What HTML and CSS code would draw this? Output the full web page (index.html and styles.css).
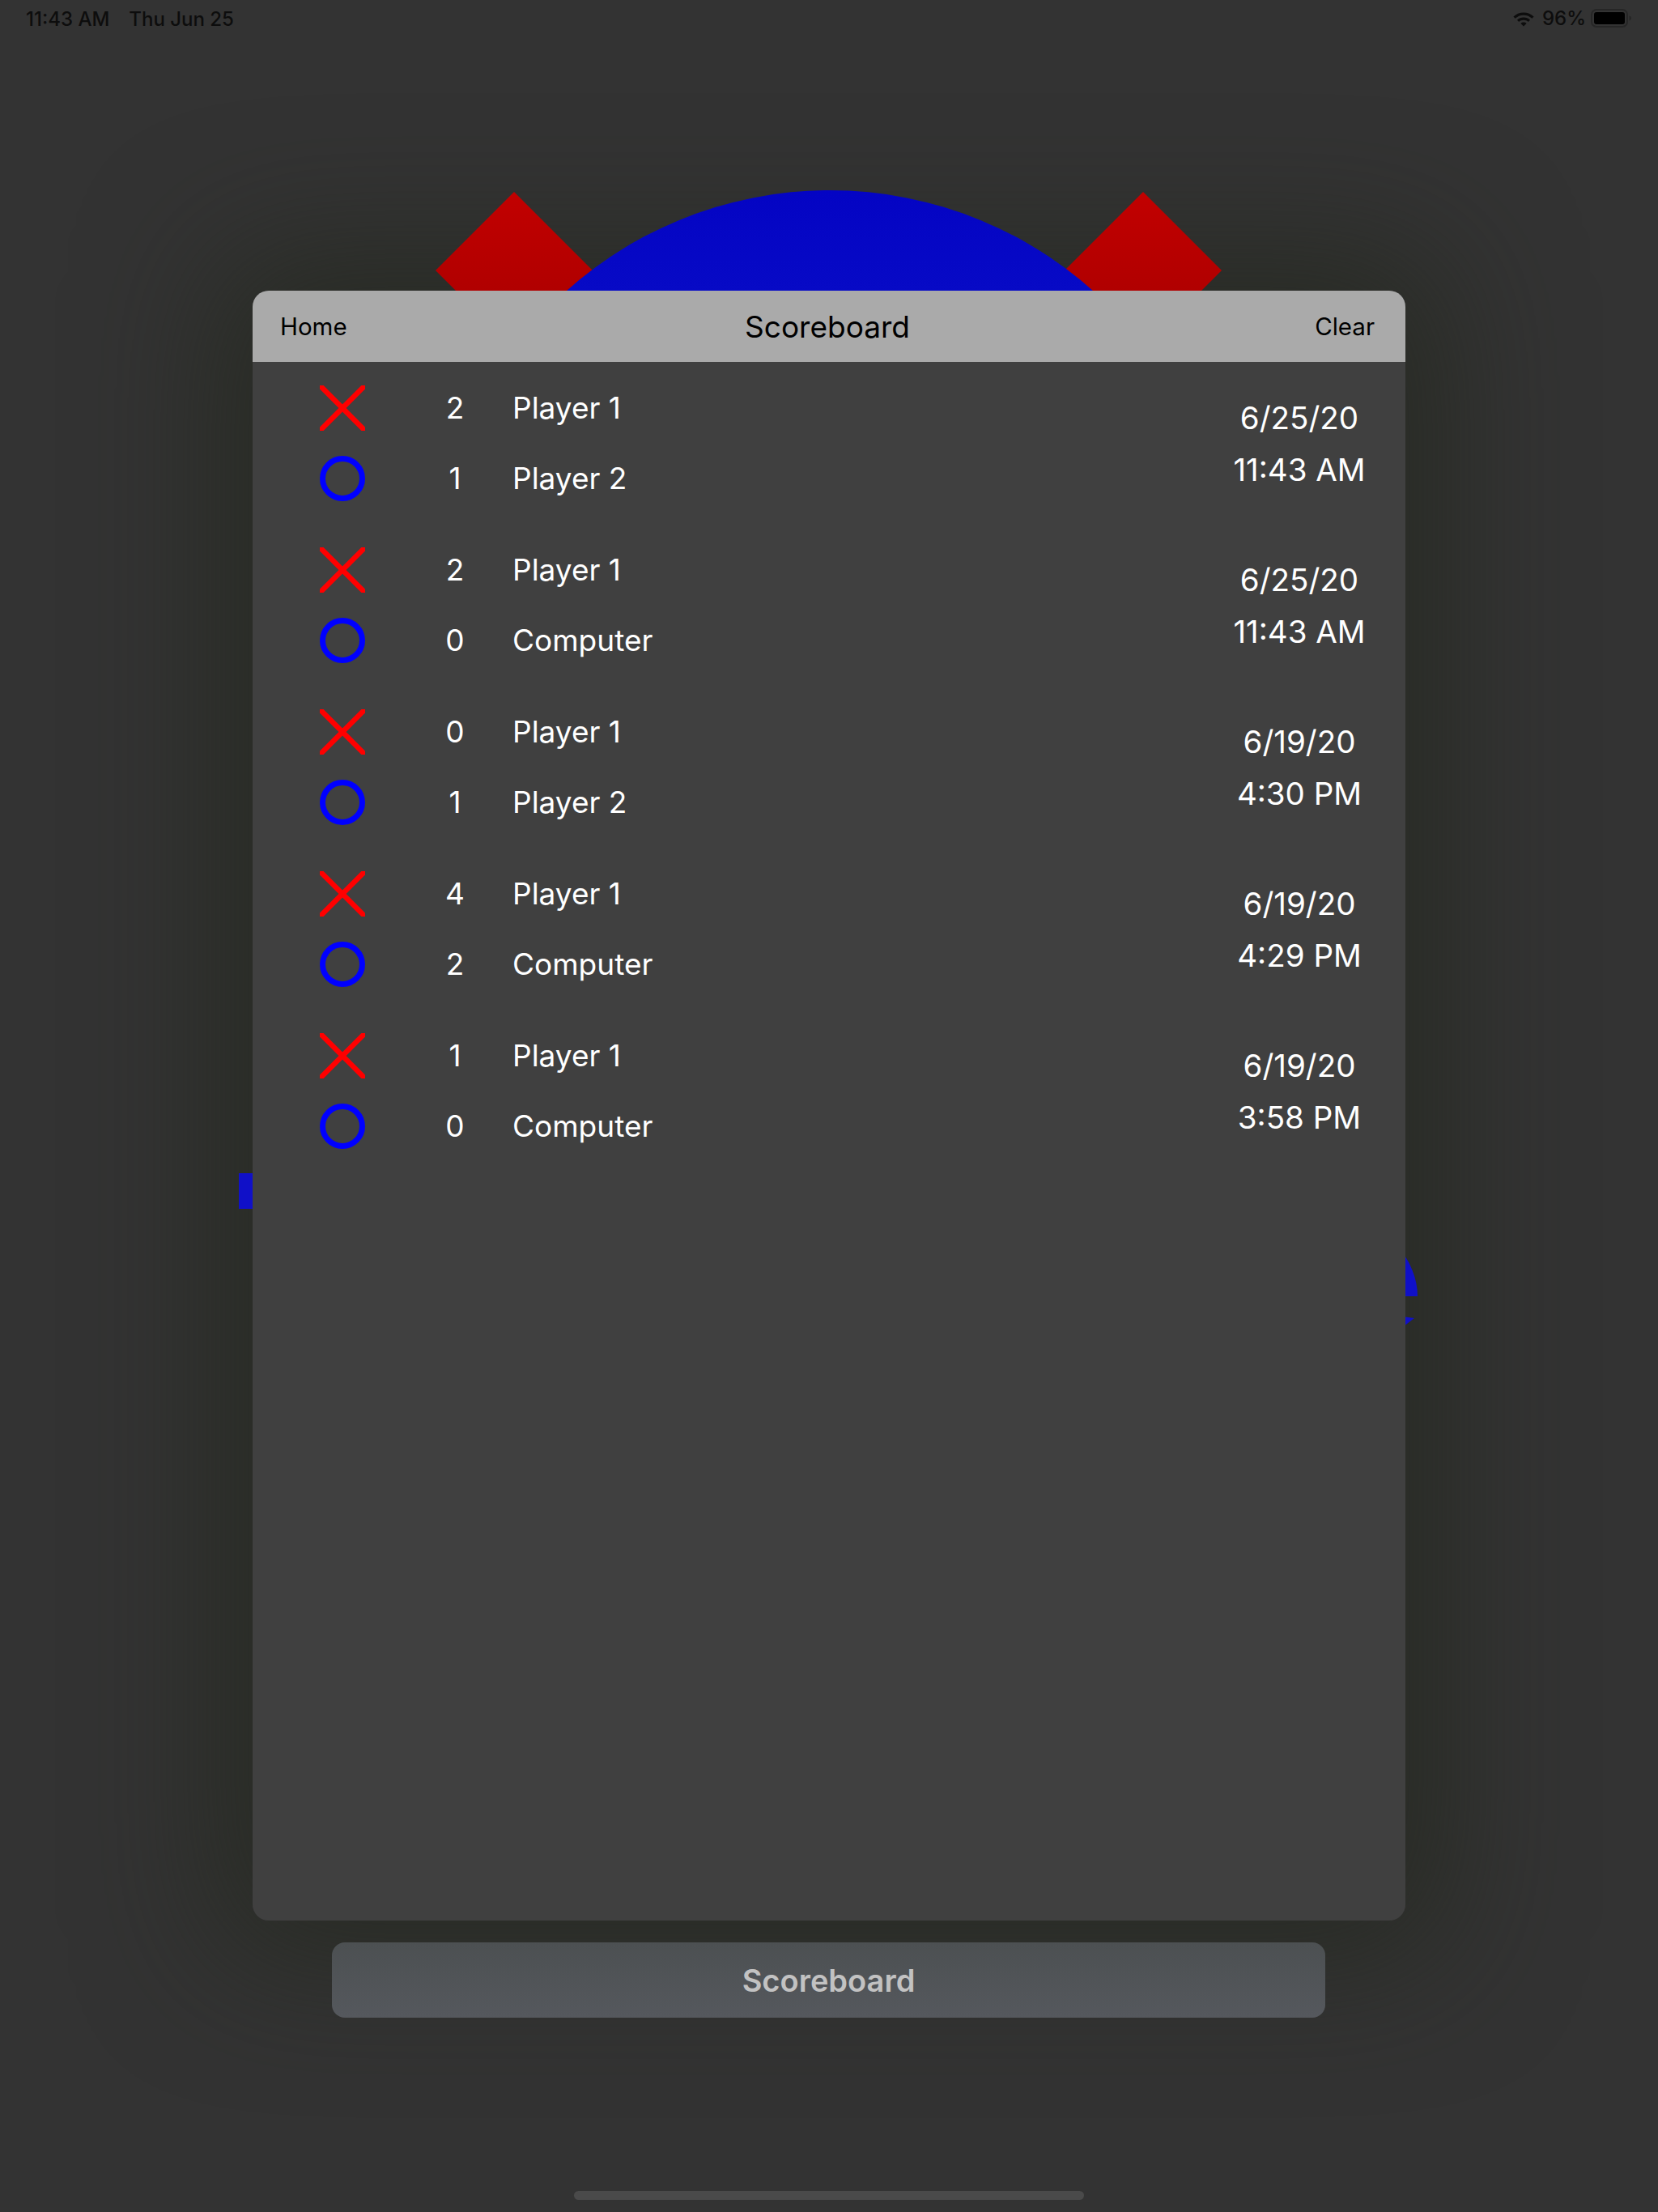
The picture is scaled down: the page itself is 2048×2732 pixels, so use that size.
FILE: index.html
```html
<!DOCTYPE html>
<html lang="en">
<head>
<meta charset="utf-8">
<title>Scoreboard</title>
<link rel="stylesheet" href="styles.css">
</head>
<body>
<div class="dim"></div>
<div class="page">
  <div class="status">
    <div class="status-left"><span>11:43 AM</span><span>Thu Jun 25</span></div>
    <div class="status-right">
      <svg class="wifi" width="28" height="20" viewBox="0 0 28 20">
        <path d="M14 2.5c4.9 0 9.3 1.9 12.6 5l-2.2 2.3C21.7 7.3 18 5.7 14 5.7S6.3 7.3 3.6 9.8L1.4 7.5C4.7 4.4 9.1 2.5 14 2.5z" fill="#0d0d0d"/>
        <path d="M14 8.6c3.1 0 5.9 1.2 8 3.1l-2.2 2.3c-1.5-1.4-3.5-2.2-5.8-2.2s-4.3.8-5.8 2.2L6 11.7c2.1-1.9 4.9-3.1 8-3.1z" fill="#0d0d0d"/>
        <path d="M14 14.6c1.4 0 2.6.5 3.5 1.4L14 19.6 10.5 16c.9-.9 2.1-1.4 3.5-1.4z" fill="#0d0d0d"/>
      </svg>
      <span class="pct">96%</span>
      <svg class="battery" width="52" height="24" viewBox="0 0 52 24">
        <rect x="1" y="1" width="44" height="21" rx="6" fill="none" stroke="#262626" stroke-width="2"/>
        <rect x="4" y="4" width="38" height="15" rx="3" fill="#000"/>
        <path d="M47.5 8.5c1.6.4 2.5 1.6 2.5 3s-.9 2.6-2.5 3z" fill="#262626"/>
      </svg>
    </div>
  </div>
  <div class="art">
    <svg width="2048" height="2349" viewBox="0 50 2048 2349">
      <defs>
        <linearGradient id="red" x1="0" y1="0" x2="0" y2="1">
          <stop offset="0" stop-color="#c20000"/>
          <stop offset="1" stop-color="#a60000"/>
        </linearGradient>
        <linearGradient id="blue" x1="0" y1="0" x2="0" y2="1">
          <stop offset="0" stop-color="#0404c4"/>
          <stop offset="0.3" stop-color="#0b12c8"/>
          <stop offset="1" stop-color="#1010c8"/>
        </linearGradient>
      </defs>
      <polygon points="635,237 732,334 635,431 538,334" fill="url(#red)"/>
      <polygon points="1412,237 1509,334 1412,431 1315,334" fill="url(#red)"/>
      <circle cx="1025" cy="723" r="488" fill="url(#blue)"/>
      <rect x="295" y="1449" width="40" height="44" fill="#1010c8"/>
      <path d="M1725 1538 C1742 1556 1751 1580 1751 1601 L1725 1601 Z" fill="#1010c8"/>
      <polygon points="1725,1625 1747,1628 1725,1645" fill="#1010c8"/>
    </svg>
  </div>
  <button class="board-btn">Scoreboard</button>
  <div class="home-bar"></div>
</div>

<div class="modal">
  <div class="modal-head">
    <span class="head-left">Home</span>
    <span class="head-title">Scoreboard</span>
    <span class="head-right">Clear</span>
  </div>
  <div class="games">
    <div class="game">
      <svg class="icon mark-x" viewBox="0 0 56 56"><line x1="-3" y1="-3" x2="59" y2="59"/><line x1="59" y1="-3" x2="-3" y2="59"/></svg>
      <span class="score s1">2</span><span class="name n1">Player 1</span>
      <svg class="icon mark-o" viewBox="0 0 56 56"><circle cx="28" cy="28" r="24.5"/></svg>
      <span class="score s2">1</span><span class="name n2">Player 2</span>
      <div class="when"><span>6/25/20</span><span>11:43 AM</span></div>
    </div>
    <div class="game">
      <svg class="icon mark-x" viewBox="0 0 56 56"><line x1="-3" y1="-3" x2="59" y2="59"/><line x1="59" y1="-3" x2="-3" y2="59"/></svg>
      <span class="score s1">2</span><span class="name n1">Player 1</span>
      <svg class="icon mark-o" viewBox="0 0 56 56"><circle cx="28" cy="28" r="24.5"/></svg>
      <span class="score s2">0</span><span class="name n2">Computer</span>
      <div class="when"><span>6/25/20</span><span>11:43 AM</span></div>
    </div>
    <div class="game">
      <svg class="icon mark-x" viewBox="0 0 56 56"><line x1="-3" y1="-3" x2="59" y2="59"/><line x1="59" y1="-3" x2="-3" y2="59"/></svg>
      <span class="score s1">0</span><span class="name n1">Player 1</span>
      <svg class="icon mark-o" viewBox="0 0 56 56"><circle cx="28" cy="28" r="24.5"/></svg>
      <span class="score s2">1</span><span class="name n2">Player 2</span>
      <div class="when"><span>6/19/20</span><span>4:30 PM</span></div>
    </div>
    <div class="game">
      <svg class="icon mark-x" viewBox="0 0 56 56"><line x1="-3" y1="-3" x2="59" y2="59"/><line x1="59" y1="-3" x2="-3" y2="59"/></svg>
      <span class="score s1">4</span><span class="name n1">Player 1</span>
      <svg class="icon mark-o" viewBox="0 0 56 56"><circle cx="28" cy="28" r="24.5"/></svg>
      <span class="score s2">2</span><span class="name n2">Computer</span>
      <div class="when"><span>6/19/20</span><span>4:29 PM</span></div>
    </div>
    <div class="game">
      <svg class="icon mark-x" viewBox="0 0 56 56"><line x1="-3" y1="-3" x2="59" y2="59"/><line x1="59" y1="-3" x2="-3" y2="59"/></svg>
      <span class="score s1">1</span><span class="name n1">Player 1</span>
      <svg class="icon mark-o" viewBox="0 0 56 56"><circle cx="28" cy="28" r="24.5"/></svg>
      <span class="score s2">0</span><span class="name n2">Computer</span>
      <div class="when"><span>6/19/20</span><span>3:58 PM</span></div>
    </div>
  </div>
</div>
</body>
</html>
```
FILE: styles.css
```css
* { box-sizing: border-box; }

html, body {
  margin: 0;
  padding: 0;
}

body {
  width: 2048px;
  height: 2732px;
  overflow: hidden;
  position: relative;
  background: #333333;
  font-family: Inter, "Noto Sans", "Liberation Sans", sans-serif;
}

.dim {
  position: absolute;
  left: 312px;
  top: 359px;
  width: 1424px;
  height: 2013px;
  border-radius: 20px;
  box-shadow: 0 0 170px 40px rgba(36, 40, 31, 0.75);
  z-index: 0;
}

.page {
  position: relative;
  z-index: 1;
  display: flex;
  flex-direction: column;
  height: 2732px;
}

.status {
  height: 50px;
  display: flex;
  justify-content: space-between;
  align-items: flex-start;
  padding: 0 31px 0 32px;
  color: #0d0d0d;
  font-size: 24px;
  font-weight: 500;
  line-height: 1;
}

.status-left {
  display: flex;
  gap: 24px;
  padding-top: 12px;
}

.status-right {
  display: flex;
  align-items: center;
  padding-top: 11px;
}

.wifi { margin-right: 9px; margin-top: -1px; }
.pct { margin-right: 6px; }
.battery { display: block; }

.art {
  height: 2349px;
  flex: none;
}

.art svg { display: block; }

.board-btn {
  flex: none;
  margin-left: 410px;
  width: 1227px;
  height: 93px;
  border: none;
  border-radius: 16px;
  background: linear-gradient(#4c5052, #55585d);
  color: #c2c2c2;
  font-family: Inter, "Noto Sans", "Liberation Sans", sans-serif;
  font-size: 38px;
  font-weight: 600;
  padding: 0;
}

.home-bar {
  flex: none;
  margin-top: 214px;
  margin-left: 709px;
  width: 630px;
  height: 11px;
  border-radius: 6px;
  background: #4a4a4a;
}

.modal {
  position: absolute;
  left: 312px;
  top: 359px;
  width: 1424px;
  height: 2013px;
  border-radius: 20px;
  overflow: hidden;
  background: #404040;
  z-index: 2;
}

.modal-head {
  height: 88px;
  background: #aaaaaa;
  display: grid;
  grid-template-columns: 1fr auto 1fr;
  align-items: center;
  padding: 0 38px 0 34px;
  color: #000;
}

.head-left { font-size: 29.5px; justify-self: start; }
.head-right { font-size: 29.5px; justify-self: end; }
.head-title { font-size: 37px; }

.games {
  display: flex;
  flex-direction: column;
}

.game {
  display: grid;
  grid-template-columns: 56px 81px 60px 41px 1fr 262px;
  grid-template-rows: 87px 87px;
  padding: 13px 0 13px 83px;
  align-items: center;
  color: #ffffff;
}

.icon {
  width: 56px;
  height: 56px;
  grid-column: 1;
  display: block;
}

.mark-x line {
  stroke: #ff0000;
  stroke-width: 6.5;
}

.mark-o circle {
  fill: none;
  stroke: #0000ff;
  stroke-width: 7;
}

.mark-x { grid-row: 1; }
.mark-o { grid-row: 2; }

.score {
  grid-column: 3;
  text-align: center;
  font-size: 37px;
}

.name {
  grid-column: 5;
  font-size: 37px;
}

.s1, .n1 { grid-row: 1; }
.s2, .n2 { grid-row: 2; }

.when {
  grid-column: 6;
  grid-row: 1 / span 2;
  display: flex;
  flex-direction: column;
  align-items: center;
  font-size: 38.5px;
  line-height: 64px;
  padding-top: 2px;
}
```
